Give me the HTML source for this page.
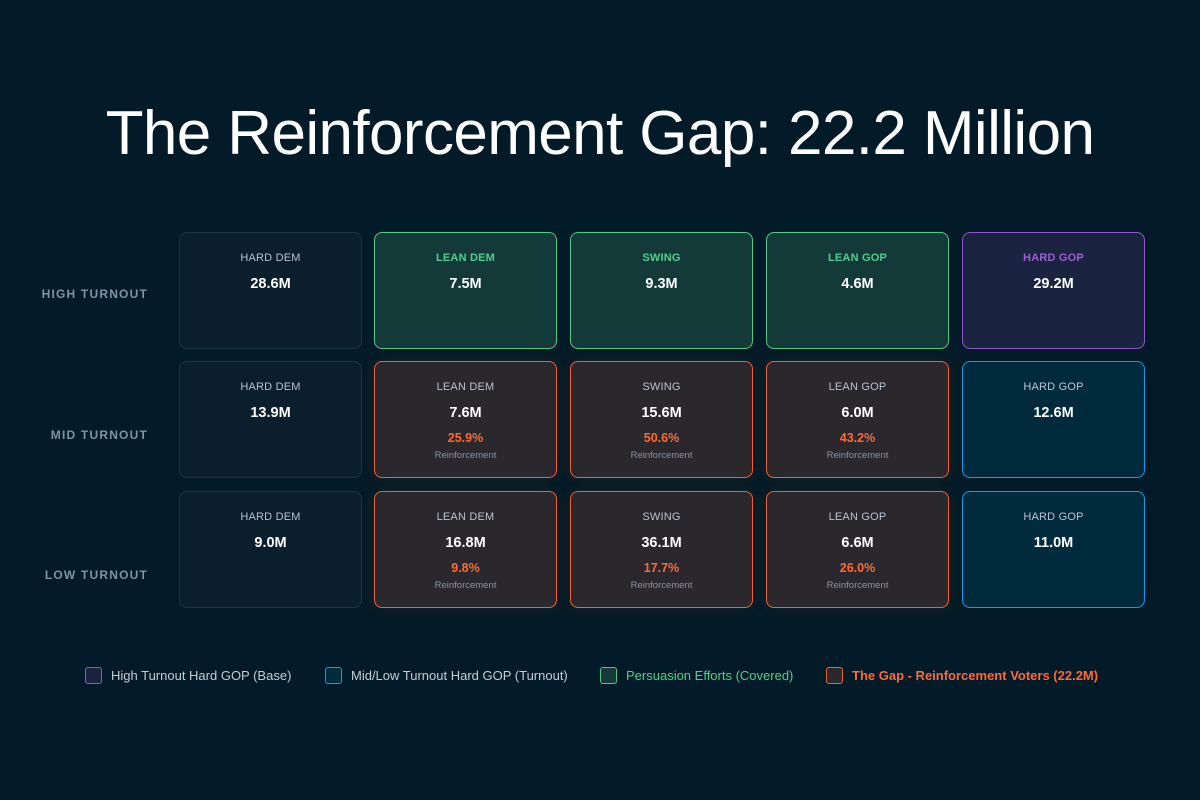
<!DOCTYPE html>
<html><head><meta charset="utf-8"><style>
*{margin:0;padding:0;box-sizing:border-box}
body{width:1200px;height:800px;background:#031b28;font-family:"Liberation Sans",sans-serif;position:relative;overflow:hidden}
h1{position:absolute;top:98px;left:0;width:1200px;text-align:center;color:#fff;font-weight:400;font-size:62px;letter-spacing:-0.6px;white-space:nowrap}
.rl{position:absolute;width:148px;left:0;text-align:right;color:#7f93a6;font-weight:700;font-size:12px;letter-spacing:1.2px}
.c{position:absolute;width:183px;height:117px;border-radius:8px;border:1.5px solid;text-align:center}
.c .l{position:absolute;top:19px;width:100%;font-size:11px;color:#b9c3d2;letter-spacing:.2px}
.c .v{position:absolute;top:43px;width:100%;font-size:14.5px;font-weight:700;color:#fff}
.c .p{position:absolute;top:69px;width:100%;font-size:12.5px;font-weight:700;color:#ff6a33}
.c .r{position:absolute;top:88px;width:100%;font-size:9.5px;color:#8a93a3}
.hd{background:#0b1e2b;border-color:#1f3442}
.gr{background:#133a39;border-color:#4fca83}
.gr .l{color:#4fd08a;font-weight:700}
.pu{background:#1a2440;border-color:#9355c9}
.pu .l{color:#9d5fd3;font-weight:700}
.or{background:#2a282d;border-color:#f2612b;box-shadow:0 0 14px rgba(242,97,43,.12)}
.bl{background:#022a3d;border-color:#159ce6}
.lg{position:absolute;top:667px;font-size:13px;color:#c5ccd6;display:flex;align-items:center;white-space:nowrap}
.lg i{display:inline-block;width:17px;height:17px;border-radius:3px;border:1.5px solid;margin-right:9px}
</style></head><body>
<h1>The Reinforcement Gap: 22.2 Million</h1>
<div class="rl" style="top:287px">HIGH TURNOUT</div>
<div class="rl" style="top:428px">MID TURNOUT</div>
<div class="rl" style="top:568px">LOW TURNOUT</div>

<div class="c hd" style="left:179px;top:232px"><div class="l">HARD DEM</div><div class="v">28.6M</div></div>
<div class="c gr" style="left:374px;top:232px"><div class="l">LEAN DEM</div><div class="v">7.5M</div></div>
<div class="c gr" style="left:570px;top:232px"><div class="l">SWING</div><div class="v">9.3M</div></div>
<div class="c gr" style="left:766px;top:232px"><div class="l">LEAN GOP</div><div class="v">4.6M</div></div>
<div class="c pu" style="left:962px;top:232px"><div class="l">HARD GOP</div><div class="v">29.2M</div></div>

<div class="c hd" style="left:179px;top:361px"><div class="l">HARD DEM</div><div class="v">13.9M</div></div>
<div class="c or" style="left:374px;top:361px"><div class="l">LEAN DEM</div><div class="v">7.6M</div><div class="p">25.9%</div><div class="r">Reinforcement</div></div>
<div class="c or" style="left:570px;top:361px"><div class="l">SWING</div><div class="v">15.6M</div><div class="p">50.6%</div><div class="r">Reinforcement</div></div>
<div class="c or" style="left:766px;top:361px"><div class="l">LEAN GOP</div><div class="v">6.0M</div><div class="p">43.2%</div><div class="r">Reinforcement</div></div>
<div class="c bl" style="left:962px;top:361px"><div class="l">HARD GOP</div><div class="v">12.6M</div></div>

<div class="c hd" style="left:179px;top:491px"><div class="l">HARD DEM</div><div class="v">9.0M</div></div>
<div class="c or" style="left:374px;top:491px"><div class="l">LEAN DEM</div><div class="v">16.8M</div><div class="p">9.8%</div><div class="r">Reinforcement</div></div>
<div class="c or" style="left:570px;top:491px"><div class="l">SWING</div><div class="v">36.1M</div><div class="p">17.7%</div><div class="r">Reinforcement</div></div>
<div class="c or" style="left:766px;top:491px"><div class="l">LEAN GOP</div><div class="v">6.6M</div><div class="p">26.0%</div><div class="r">Reinforcement</div></div>
<div class="c bl" style="left:962px;top:491px"><div class="l">HARD GOP</div><div class="v">11.0M</div></div>

<div class="lg" style="left:85px"><i style="background:#1a2440;border-color:#9355c9"></i>High Turnout Hard GOP (Base)</div>
<div class="lg" style="left:325px"><i style="background:#022a3d;border-color:#159ce6"></i>Mid/Low Turnout Hard GOP (Turnout)</div>
<div class="lg" style="left:600px;color:#4fd08a"><i style="background:#133a39;border-color:#4fca83"></i>Persuasion Efforts (Covered)</div>
<div class="lg" style="left:826px;color:#ff6a33;font-weight:700"><i style="background:#2a282d;border-color:#f2612b"></i>The Gap - Reinforcement Voters (22.2M)</div>
</body></html>
